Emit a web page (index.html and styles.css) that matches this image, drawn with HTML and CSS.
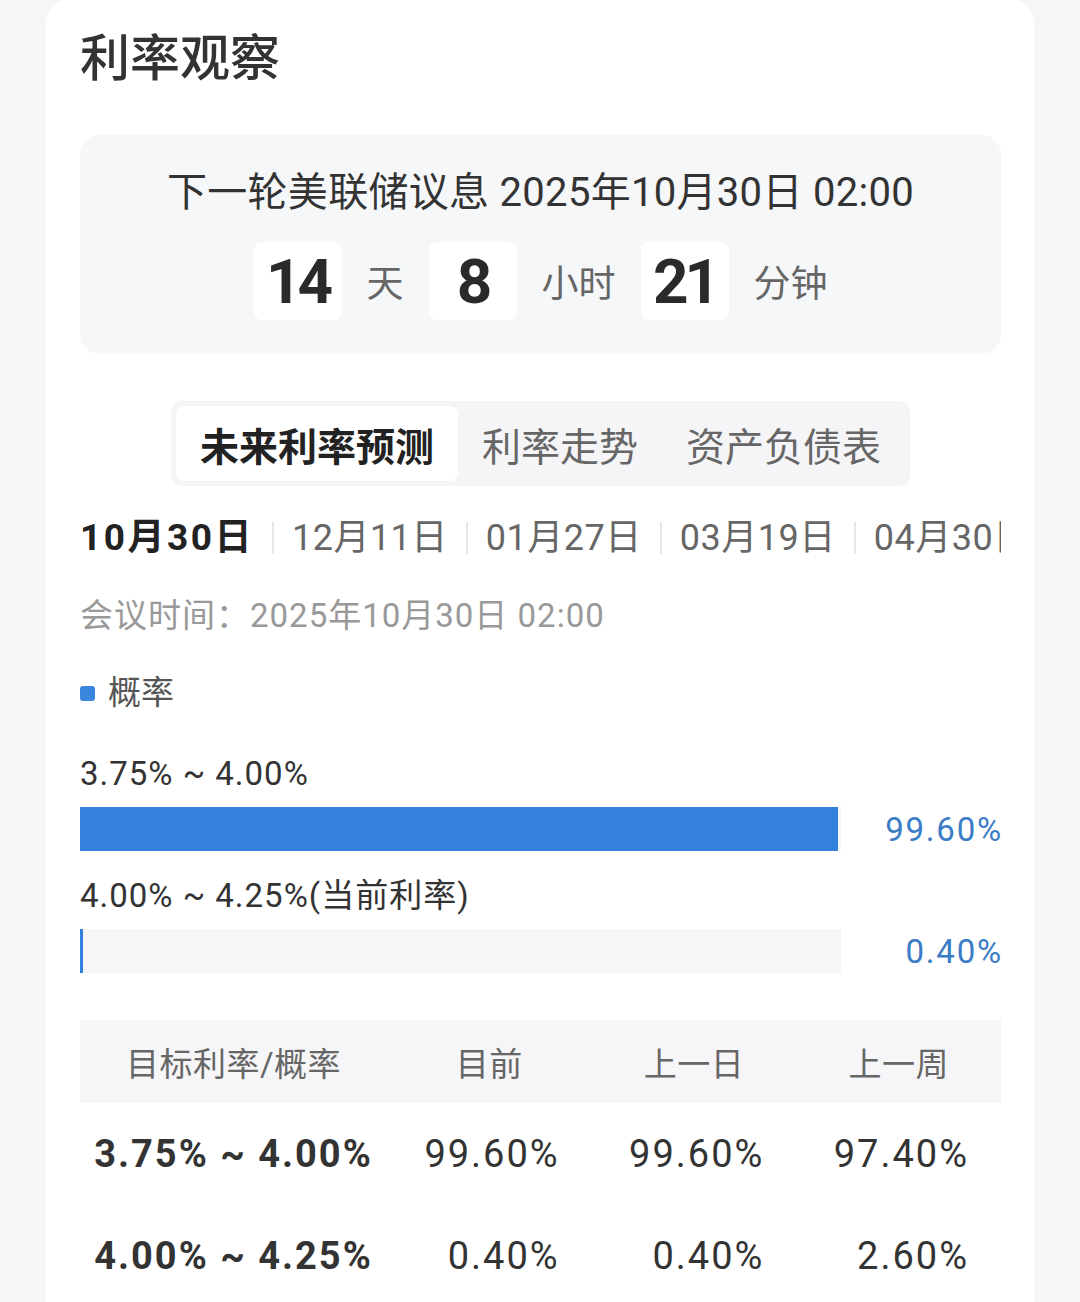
FILE: index.html
```html
<!DOCTYPE html>
<html lang="zh-CN">
<head>
<meta charset="utf-8">
<title>利率观察</title>
<link rel="stylesheet" href="styles.css">
</head>
<body>
<div class="card">
  <h1 class="title">利率观察</h1>

  <section class="countdown">
    <div class="cd-head">下一轮美联储议息 2025年10月30日 02:00</div>
    <div class="cd-row">
      <span class="cd-num">14</span><span class="cd-unit">天</span>
      <span class="cd-num">8</span><span class="cd-unit">小时</span>
      <span class="cd-num">21</span><span class="cd-unit">分钟</span>
    </div>
  </section>

  <div class="tabs-wrap">
    <div class="tabs">
      <div class="tab active">未来利率预测</div>
      <div class="tab">利率走势</div>
      <div class="tab">资产负债表</div>
    </div>
  </div>

  <div class="dates">
    <span class="date active">10月30日</span><span class="sep"></span>
    <span class="date">12月11日</span><span class="sep"></span>
    <span class="date">01月27日</span><span class="sep"></span>
    <span class="date">03月19日</span><span class="sep"></span>
    <span class="date">04月30日</span>
  </div>

  <div class="meeting">会议时间：2025年10月30日 02:00</div>

  <div class="legend"><span class="legend-dot"></span>概率</div>

  <div class="prob">
    <div class="prob-label">3.75% ~ 4.00%</div>
    <div class="prob-row">
      <div class="track"><div class="fill" style="width:99.6%"></div></div>
      <div class="prob-val">99.60%</div>
    </div>
  </div>
  <div class="prob">
    <div class="prob-label">4.00% ~ 4.25%(当前利率)</div>
    <div class="prob-row">
      <div class="track"><div class="fill" style="width:0.4%"></div></div>
      <div class="prob-val">0.40%</div>
    </div>
  </div>

  <div class="table">
    <div class="thead">
      <div class="th">目标利率/概率</div>
      <div class="th">目前</div>
      <div class="th">上一日</div>
      <div class="th">上一周</div>
    </div>
    <div class="tr">
      <div class="td range">3.75% ~ 4.00%</div>
      <div class="td num">99.60%</div>
      <div class="td num">99.60%</div>
      <div class="td num">97.40%</div>
    </div>
    <div class="tr">
      <div class="td range">4.00% ~ 4.25%</div>
      <div class="td num">0.40%</div>
      <div class="td num">0.40%</div>
      <div class="td num">2.60%</div>
    </div>
  </div>
</div>
</body>
</html>
```

FILE: styles.css
```css
* { box-sizing: border-box; }
html, body {
  margin: 0;
  padding: 0;
  background: #f6f6f8;
}
body {
  font-family: "Roboto", "Noto Sans CJK SC", sans-serif;
  color: #333;
  height: 1302px;
  overflow: hidden;
}
.card {
  margin-left: 46px;
  width: 988px;
  min-height: 1320px;
  background: #ffffff;
  border-radius: 22px 22px 0 0;
  padding: 24px 33px 0 34px;
}
.title {
  margin: 0;
  font-size: 50px;
  line-height: 60px;
  font-weight: 500;
  color: #333;
  font-family: "Noto Sans CJK SC", sans-serif;
}

/* countdown */
.countdown {
  margin-top: 51px;
  background: #f6f7f9;
  border-radius: 20px;
  padding: 34px 0 34px;
  display: flex;
  flex-direction: column;
  align-items: center;
}
.cd-head {
  font-size: 40px;
  line-height: 48px;
  color: #333;
  letter-spacing: 0.3px;
}
.cd-row {
  margin-top: 25px;
  display: flex;
  align-items: center;
  gap: 25px;
}
.cd-num {
  width: 88px;
  height: 78px;
  background: #ffffff;
  border-radius: 8px;
  display: flex;
  align-items: center;
  justify-content: center;
  font-size: 62px;
  font-weight: 700;
  letter-spacing: -4px;
  color: #2a2a2a;
}
.cd-unit {
  font-size: 37px;
  color: #666;
}

/* tabs */
.tabs-wrap {
  margin-top: 47px;
  display: flex;
  justify-content: center;
}
.tabs {
  display: flex;
  background: #f5f5f7;
  border-radius: 10px;
  padding: 5px;
}
.tab {
  height: 75px;
  padding: 0 24px;
  display: flex;
  align-items: center;
  font-size: 39px;
  color: #666;
  border-radius: 8px;
}
.tab.active {
  background: #ffffff;
  color: #222;
  font-weight: 700;
}

/* dates */
.dates {
  margin-top: 27px;
  display: flex;
  align-items: center;
  white-space: nowrap;
  overflow: hidden;
  height: 50px;
}
.date {
  font-size: 36px;
  line-height: 50px;
  color: #666;
  flex: none;
  letter-spacing: 0.5px;
}
.date.active {
  font-weight: 700;
  color: #222;
  font-size: 37px;
  letter-spacing: 2.5px;
}
.sep {
  flex: none;
  width: 2px;
  height: 32px;
  background: #e6e6e8;
  margin: 0 18px;
}

.meeting {
  margin-top: 31px;
  font-size: 33px;
  line-height: 44px;
  color: #999;
  letter-spacing: 1px;
}
.legend {
  margin-top: 33px;
  font-size: 33px;
  line-height: 44px;
  color: #555;
  display: flex;
  align-items: center;
}
.legend-dot {
  width: 15px;
  height: 15px;
  border-radius: 3px;
  background: #3a86dd;
  margin-right: 13px;
}

/* probability bars */
.prob { margin-top: 37px; }
.prob + .prob { margin-top: 23px; }
.prob-label {
  font-size: 33px;
  line-height: 44px;
  color: #333;
  letter-spacing: 1px;
}
.prob-row {
  margin-top: 11px;
  display: flex;
  align-items: center;
}
.track {
  width: 761px;
  height: 44px;
  background: #f6f6f8;
  flex: none;
}
.fill {
  height: 100%;
  background: #3481dd;
}
.prob-val {
  flex: 1;
  text-align: right;
  font-size: 33px;
  color: #3b7cc6;
  letter-spacing: 1.8px;
  margin-right: -2px;
}

/* table */
.table { margin-top: 47px; }
.thead, .tr {
  display: grid;
  grid-template-columns: 1.5fr 1fr 1fr 1fr;
  align-items: center;
}
.thead {
  height: 83px;
  background: #f6f6f8;
}
.th {
  text-align: center;
  font-size: 33px;
  color: #666;
  letter-spacing: 0.5px;
}
.tr { height: 102px; }
.td {
  font-size: 38px;
  color: #333;
  letter-spacing: 2px;
}
.td.range {
  text-align: center;
  font-weight: 700;
}
.td.num {
  text-align: right;
  padding-right: 32px;
}
```
